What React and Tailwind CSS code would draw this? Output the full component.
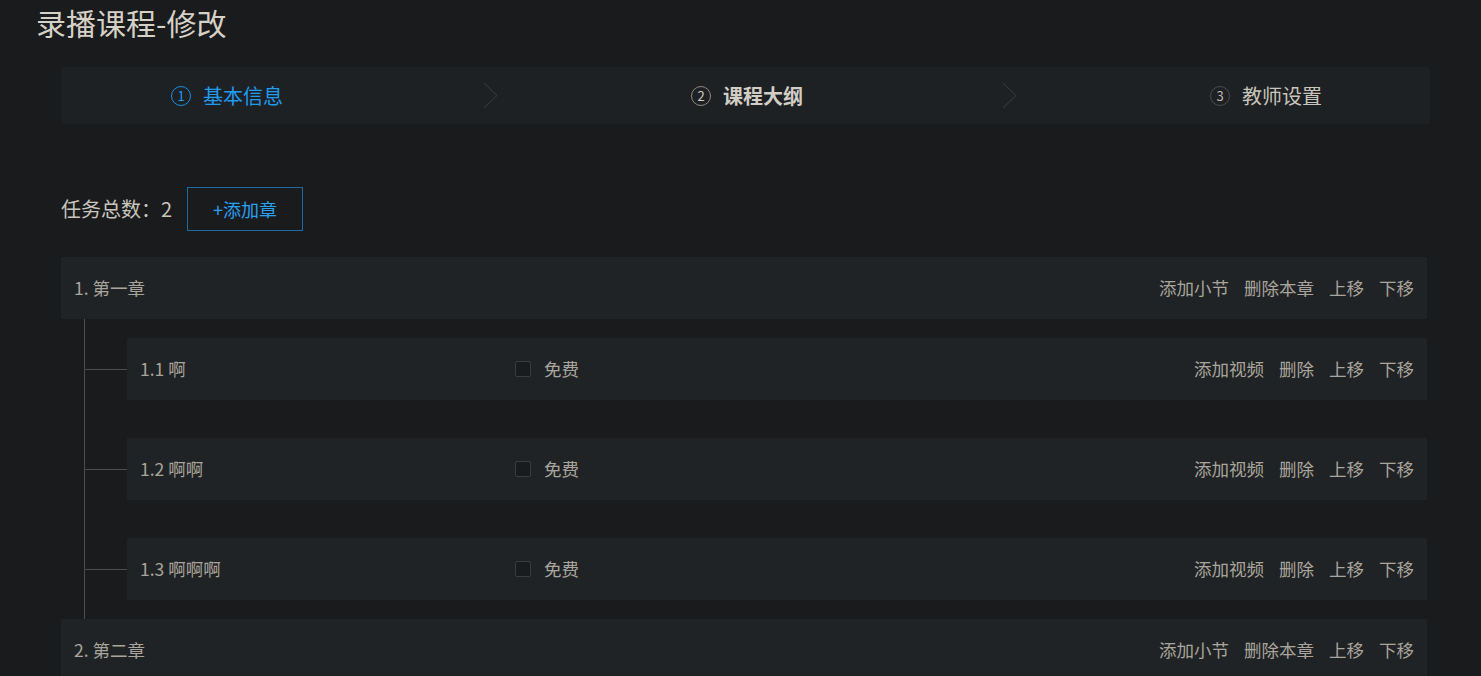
import React from "react";

const chapters = [
  { title: "1. 第一章", sections: ["1.1 啊", "1.2 啊啊", "1.3 啊啊啊"] },
  { title: "2. 第二章", sections: [] },
];

function Chevron() {
  return (
    <svg width="15" height="27" viewBox="0 0 15 27" className="shrink-0">
      <path d="M1 1 L14 13.5 L1 26" fill="none" stroke="#3a3e41" strokeWidth="1" />
    </svg>
  );
}

function StepNum({ n, tone }) {
  const styles = {
    active: "border-[#1a8ee0] text-[#1f9bf0]",
    current: "border-[#8c877d] text-[#d2cec6] font-normal",
    idle: "border-[#4a4c4e] text-[#bdb9b0]",
  };
  return (
    <span
      className={`w-[20px] h-[20px] rounded-full border-[1.5px] flex items-center justify-center text-[13px] leading-none ${styles[tone]}`}
    >
      {n}
    </span>
  );
}

function ChapterRow({ title }) {
  return (
    <div className="h-[62px] w-[1366px] bg-[#202325] flex items-center pl-[13px] pr-[13px] text-[17.5px] text-[#a9a59c]">
      <span>{title}</span>
      <div className="ml-auto flex gap-[15px]">
        <span>添加小节</span>
        <span>删除本章</span>
        <span>上移</span>
        <span>下移</span>
      </div>
    </div>
  );
}

function SectionRow({ title }) {
  return (
    <div className="flex items-center py-[19px]">
      <div className="w-[42px] h-px bg-[#4c4d4f]" />
      <div className="h-[62px] w-[1300px] bg-[#202325] flex items-center pl-[13px] pr-[13px] text-[17.5px] text-[#a9a59c]">
        <span className="w-[375px]">{title}</span>
        <span className="w-[16px] h-[16px] rounded-[2px] border border-[#3a3c3e] bg-[#1a1b1d]" />
        <span className="ml-[13px]">免费</span>
        <div className="ml-auto flex gap-[15px]">
          <span>添加视频</span>
          <span>删除</span>
          <span>上移</span>
          <span>下移</span>
        </div>
      </div>
    </div>
  );
}

export default function App() {
  return (
    <div
      className="min-h-[676px] w-full bg-[#1a1b1d] overflow-hidden"
      style={{ fontFamily: '"Noto Sans CJK SC", "Noto Sans", sans-serif' }}
    >
      <h1 className="pl-[36px] pt-[2px] text-[30px] leading-[40px] text-[#d6d1c6]">录播课程-修改</h1>

      <div className="pl-[61px]">
        {/* steps */}
        <div className="mt-[25px] w-[1369px] h-[57px] rounded-[4px] bg-[#1e2123] flex items-center text-[20px]">
          <div className="w-[422px] pl-[110px] flex items-center gap-[12px] text-[#1f9bf0]">
            <StepNum n="1" tone="active" />
            <span>基本信息</span>
          </div>
          <Chevron />
          <div className="w-[504px] pl-[193px] flex items-center gap-[12px] text-[#d2cec6] font-bold">
            <StepNum n="2" tone="current" />
            <span>课程大纲</span>
          </div>
          <Chevron />
          <div className="pl-[193px] flex items-center gap-[12px] text-[#c9c5bc]">
            <StepNum n="3" tone="idle" />
            <span>教师设置</span>
          </div>
        </div>

        {/* task count */}
        <div className="mt-[63px] flex items-center">
          <span className="text-[20px] text-[#c9c5bc]">任务总数：2</span>
          <button className="ml-[15px] w-[116px] h-[44px] border border-[#1b6aa3] text-[#2aa0f2] text-[18px]">
            +添加章
          </button>
        </div>

        {/* outline */}
        <div className="mt-[26px]">
          {chapters.map((c) => (
            <div key={c.title}>
              <ChapterRow title={c.title} />
              {c.sections.length > 0 && (
                <div className="ml-[23px] border-l border-[#4c4d4f]">
                  {c.sections.map((s) => (
                    <SectionRow key={s} title={s} />
                  ))}
                </div>
              )}
            </div>
          ))}
        </div>
      </div>
    </div>
  );
}
